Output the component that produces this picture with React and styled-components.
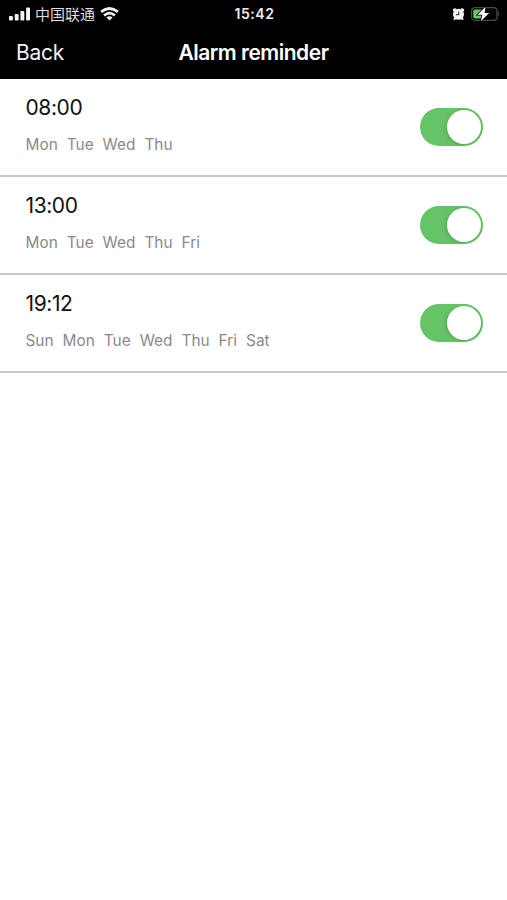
import React, { useState } from "react";
import styled, { createGlobalStyle } from "styled-components";

const GlobalStyle = createGlobalStyle`
  * {
    box-sizing: border-box;
  }

  body {
    margin: 0;
    background: #fff;
    font-family: Inter, "Liberation Sans", "Noto Sans CJK SC", sans-serif;
  }
`;

const Screen = styled.div`
  min-height: 900px;
  background: #fff;
`;

const Top = styled.div`
  height: 79px;
  background: #000;
  color: #fff;
`;

const StatusBar = styled.div`
  height: 27px;
  padding: 0 7px 0 9px;
  display: grid;
  grid-template-columns: 1fr auto 1fr;
  align-items: center;
`;

const StatusLeft = styled.div`
  display: flex;
  align-items: center;
`;

const StatusRight = styled(StatusLeft)`
  justify-content: flex-end;
  gap: 5px;
`;

const Carrier = styled.span`
  margin: 0 5px 0 4px;
  font-family: "Noto Sans CJK SC", sans-serif;
  font-size: 15px;
  line-height: 27px;
  color: #ddd;
`;

const Clock = styled.span`
  font-size: 14px;
  font-weight: 600;
  letter-spacing: 0.55px;
  color: #eee;
`;

const Header = styled.header`
  height: 52px;
  padding: 0 16px;
  display: grid;
  grid-template-columns: 1fr auto 1fr;
  align-items: center;
`;

const BackButton = styled.button`
  justify-self: start;
  padding: 0;
  border: 0;
  background: none;
  color: #f2f2f2;
  font: inherit;
  font-size: 21px;
  line-height: 52px;
  letter-spacing: -0.25px;
`;

const Title = styled.h1`
  margin: 0;
  font-size: 21px;
  font-weight: 600;
  line-height: 52px;
  letter-spacing: -0.5px;
`;

const List = styled.ul`
  margin: 0;
  padding: 0;
  list-style-type: none;
`;

const Item = styled.li`
  height: 98px;
  padding: 0 24px 0 25.5px;
  border-bottom: 2px solid #cacaca;
  display: flex;
  justify-content: space-between;
  align-items: center;
`;

const Info = styled.div`
  padding-bottom: 3px;
`;

const Time = styled.div`
  font-size: 21px;
  line-height: 28px;
  letter-spacing: -0.4px;
  color: #111;
`;

const Days = styled.div`
  margin-top: 11px;
  display: flex;
  gap: 9px;
  font-size: 15.4px;
  line-height: 24px;
  color: #8a8a8a;
`;

const Toggle = styled.button`
  width: 63px;
  height: 38px;
  padding: 2px;
  border: 0;
  border-radius: 19px;
  display: flex;
  justify-content: ${(props) => (props.$on ? "flex-end" : "flex-start")};
  align-items: center;
  background: ${(props) => (props.$on ? "#65c466" : "#e9e9ea")};
`;

const Knob = styled.span`
  width: 34px;
  height: 34px;
  border-radius: 50%;
  background: #fff;
  box-shadow: -1px 1px 4px rgba(0, 0, 0, 0.16);
`;

const alarms = [
  { time: "08:00", days: ["Mon", "Tue", "Wed", "Thu"] },
  { time: "13:00", days: ["Mon", "Tue", "Wed", "Thu", "Fri"] },
  { time: "19:12", days: ["Sun", "Mon", "Tue", "Wed", "Thu", "Fri", "Sat"] },
];

function SignalIcon() {
  return (
    <svg width="22" height="14" viewBox="0 0 22 14" fill="#f4f4f4">
      <rect x="0" y="9" width="3.9" height="4.4" rx="1" />
      <rect x="5.7" y="7" width="3.9" height="6.4" rx="1" />
      <rect x="11.4" y="4" width="3.9" height="9.4" rx="1" />
      <rect x="17.1" y="0.6" width="3.9" height="12.8" rx="1" />
    </svg>
  );
}

function WifiIcon() {
  return (
    <svg width="19" height="14" viewBox="0 0 19 14" fill="none" stroke="#f4f4f4">
      <path d="M1.1 4.9Q9.5-1.8 17.9 4.9" strokeWidth="2.8" />
      <path d="M4.1 8.4Q9.5 4 14.9 8.4" strokeWidth="2.6" />
      <path d="M9.5 13.6L6.4 10.6Q9.5 8.1 12.6 10.6Z" fill="#f4f4f4" stroke="none" />
    </svg>
  );
}

function AlarmIcon() {
  return (
    <svg width="13" height="14" viewBox="0 0 13 14">
      <g fill="#f2f2f2">
        <path d="M1 4.2Q0.2 1.2 3.4 1.2L4.6 1.9L2.2 4.6Z" />
        <path d="M12 4.2Q12.8 1.2 9.6 1.2L8.4 1.9L10.8 4.6Z" />
        <circle cx="6.5" cy="7.3" r="5.5" />
        <path d="M2 10.5L1.3 12.6L3 13.1L5 11ZM11 10.5L11.7 12.6L10 13.1L8 11Z" />
      </g>
      <path d="M6.7 4.6V7.6H4.1" fill="none" stroke="#444" strokeWidth="1.1" />
    </svg>
  );
}

function BatteryIcon() {
  return (
    <svg width="30" height="16" viewBox="0 0 30 16">
      <rect x="1.6" y="1.7" width="25.4" height="12.6" rx="3.4" fill="none" stroke="#4c4c4c" strokeWidth="1.3" />
      <path d="M28.2 5.6Q30.2 8 28.2 10.4Z" fill="#555" />
      <rect x="3.3" y="3.4" width="9.6" height="9.2" rx="1.8" fill="#62cc6a" />
      <path
        d="M15.6 0.8L7.6 8.8H12.4L10.8 15.2L19.2 6.9H14.5Z"
        fill="#fff"
        stroke="#000"
        strokeWidth="1.6"
        paintOrder="stroke"
      />
    </svg>
  );
}

function Alarm({ time, days }) {
  const [on, setOn] = useState(true);

  return (
    <Item>
      <Info>
        <Time>{time}</Time>
        <Days>
          {days.map((day) => (
            <span key={day}>{day}</span>
          ))}
        </Days>
      </Info>
      <Toggle
        $on={on}
        role="switch"
        aria-checked={on}
        aria-label={time}
        onClick={() => setOn(!on)}
      >
        <Knob />
      </Toggle>
    </Item>
  );
}

export default function App() {
  return (
    <Screen>
      <GlobalStyle />
      <Top>
        <StatusBar>
          <StatusLeft>
            <SignalIcon />
            <Carrier>中国联通</Carrier>
            <WifiIcon />
          </StatusLeft>
          <Clock>15:42</Clock>
          <StatusRight>
            <AlarmIcon />
            <BatteryIcon />
          </StatusRight>
        </StatusBar>
        <Header>
          <BackButton>Back</BackButton>
          <Title>Alarm reminder</Title>
        </Header>
      </Top>
      <List>
        {alarms.map((alarm) => (
          <Alarm key={alarm.time} {...alarm} />
        ))}
      </List>
    </Screen>
  );
}
